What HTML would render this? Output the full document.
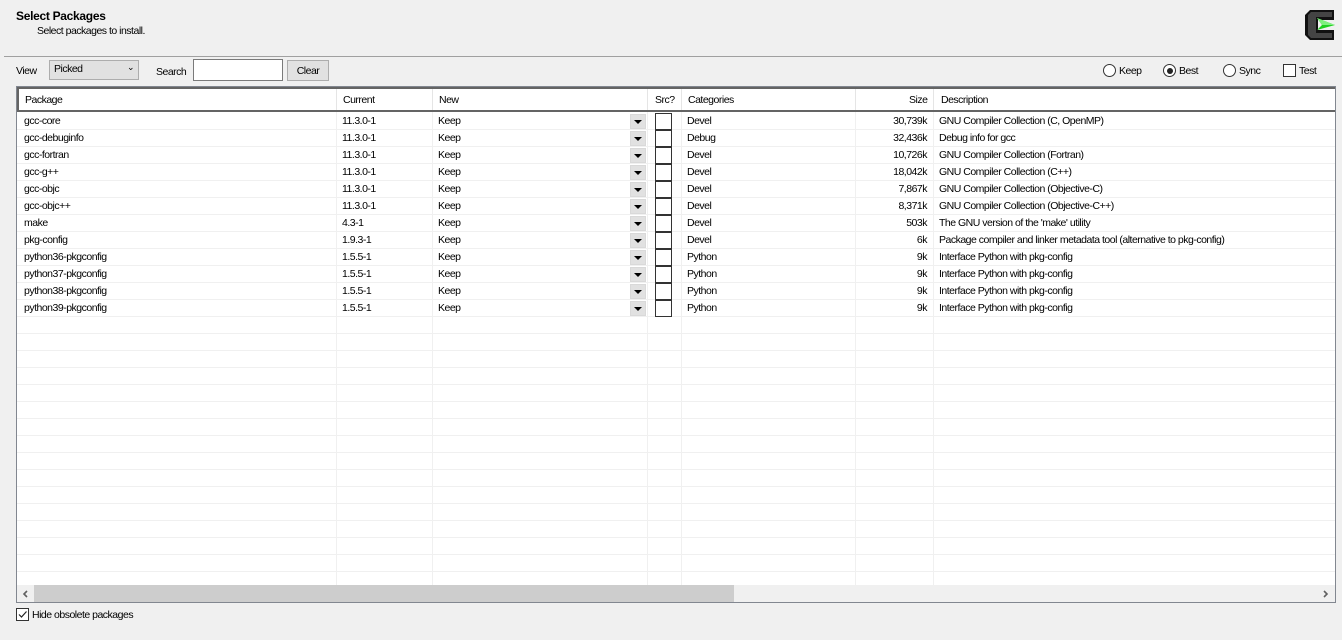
<!DOCTYPE html>
<html><head><meta charset="utf-8"><style>
*{box-sizing:border-box;margin:0;padding:0}
body{width:1342px;height:640px;background:#f0f0f0;font-family:"Liberation Sans",sans-serif;font-size:10.5px;letter-spacing:-0.5px;color:#000;position:relative;overflow:hidden}
.a{position:absolute;white-space:nowrap}
.tbl{position:absolute;left:16px;top:86px;width:1320px;height:517px;border:1px solid #828790;background:#fff;overflow:hidden}
.hdr{position:absolute;left:0;top:0;width:1318px;height:25px;border:2px solid #646464;border-right:none;background:#fff}
.row{position:absolute;left:0;width:1318px;height:17px;border-bottom:1px solid #f0f0f0}
.row span{position:absolute;top:2px}
.vl{position:absolute;top:0;width:1px;height:500px;background:#f0f0f0}
.dd{position:absolute;left:613px;top:1px;width:16px;height:15px;background:#e1e1e1;border:1px solid #d9d9d9}
.dd:after{content:"";position:absolute;left:3px;top:5px;border-left:4px solid transparent;border-right:4px solid transparent;border-top:4px solid #000}
.cb{position:absolute;left:638px;top:0px;width:17px;height:17px;border:1px solid #333;background:#fff}
.r{text-align:right}
</style></head><body>
<div class="a" style="left:16px;top:9px;font-weight:bold;font-size:12px;letter-spacing:-0.3px">Select Packages</div>
<div class="a" style="left:37px;top:25px">Select packages to install.</div>
<svg class="a" style="left:1304px;top:9px" width="34" height="34" viewBox="0 0 34 34"><path d="M6 1h24v10h-16v10h16v10h-24l-5-5v-20z" fill="#111"/><path d="M7 3h21v5h-16v16h16v5h-21l-3-3v-20z" fill="#444"/><path d="M13 9l18 7-18 5 5-5z" fill="#20d020"/><path d="M13 9l18 7h-13z" fill="#7ff07f"/></svg>
<div class="a" style="left:4px;top:56px;width:1338px;height:1px;background:#a0a0a0"></div>
<div class="a" style="left:16px;top:65px">View</div>
<div class="a" style="left:49px;top:60px;width:90px;height:20px;background:#e1e1e1;border:1px solid #adadad;padding:2px 4px">Picked<span style="position:absolute;right:4px;top:1px;font-size:9px">&#8964;</span></div>
<div class="a" style="left:156px;top:66px">Search</div>
<div class="a" style="left:193px;top:59px;width:90px;height:22px;background:#fff;border:1px solid #7a7a7a"></div>
<div class="a" style="left:287px;top:60px;width:42px;height:21px;background:#e1e1e1;border:1px solid #adadad;padding:4px 0;text-align:center">Clear</div>
<div class="a" style="left:1103px;top:64px;width:13px;height:13px;border:1px solid #333;border-radius:50%;background:#fff"></div><div class="a" style="left:1119px;top:65px">Keep</div>
<div class="a" style="left:1163px;top:64px;width:13px;height:13px;border:1px solid #333;border-radius:50%;background:#fff"><div style="position:absolute;left:2.5px;top:2.5px;width:6px;height:6px;border-radius:50%;background:#222"></div></div><div class="a" style="left:1179px;top:65px">Best</div>
<div class="a" style="left:1223px;top:64px;width:13px;height:13px;border:1px solid #333;border-radius:50%;background:#fff"></div><div class="a" style="left:1239px;top:65px">Sync</div>
<div class="a" style="left:1283px;top:64px;width:13px;height:13px;border:1px solid #333;background:#fff"></div><div class="a" style="left:1299px;top:65px">Test</div>
<div class="tbl">
<div class="vl" style="left:319px"></div><div class="vl" style="left:415px"></div><div class="vl" style="left:630px"></div><div class="vl" style="left:664px"></div><div class="vl" style="left:838px"></div><div class="vl" style="left:916px"></div>
<div class="row" style="top:26px"><span style="left:7px">gcc-core</span><span style="left:325px">11.3.0-1</span><span style="left:421px">Keep</span><div class="dd"></div><div class="cb"></div><span style="left:670px">Devel</span><span class="r" style="left:840px;width:70px">30,739k</span><span style="left:922px">GNU Compiler Collection (C, OpenMP)</span></div>
<div class="row" style="top:43px"><span style="left:7px">gcc-debuginfo</span><span style="left:325px">11.3.0-1</span><span style="left:421px">Keep</span><div class="dd"></div><div class="cb"></div><span style="left:670px">Debug</span><span class="r" style="left:840px;width:70px">32,436k</span><span style="left:922px">Debug info for gcc</span></div>
<div class="row" style="top:60px"><span style="left:7px">gcc-fortran</span><span style="left:325px">11.3.0-1</span><span style="left:421px">Keep</span><div class="dd"></div><div class="cb"></div><span style="left:670px">Devel</span><span class="r" style="left:840px;width:70px">10,726k</span><span style="left:922px">GNU Compiler Collection (Fortran)</span></div>
<div class="row" style="top:77px"><span style="left:7px">gcc-g++</span><span style="left:325px">11.3.0-1</span><span style="left:421px">Keep</span><div class="dd"></div><div class="cb"></div><span style="left:670px">Devel</span><span class="r" style="left:840px;width:70px">18,042k</span><span style="left:922px">GNU Compiler Collection (C++)</span></div>
<div class="row" style="top:94px"><span style="left:7px">gcc-objc</span><span style="left:325px">11.3.0-1</span><span style="left:421px">Keep</span><div class="dd"></div><div class="cb"></div><span style="left:670px">Devel</span><span class="r" style="left:840px;width:70px">7,867k</span><span style="left:922px">GNU Compiler Collection (Objective-C)</span></div>
<div class="row" style="top:111px"><span style="left:7px">gcc-objc++</span><span style="left:325px">11.3.0-1</span><span style="left:421px">Keep</span><div class="dd"></div><div class="cb"></div><span style="left:670px">Devel</span><span class="r" style="left:840px;width:70px">8,371k</span><span style="left:922px">GNU Compiler Collection (Objective-C++)</span></div>
<div class="row" style="top:128px"><span style="left:7px">make</span><span style="left:325px">4.3-1</span><span style="left:421px">Keep</span><div class="dd"></div><div class="cb"></div><span style="left:670px">Devel</span><span class="r" style="left:840px;width:70px">503k</span><span style="left:922px">The GNU version of the 'make' utility</span></div>
<div class="row" style="top:145px"><span style="left:7px">pkg-config</span><span style="left:325px">1.9.3-1</span><span style="left:421px">Keep</span><div class="dd"></div><div class="cb"></div><span style="left:670px">Devel</span><span class="r" style="left:840px;width:70px">6k</span><span style="left:922px">Package compiler and linker metadata tool (alternative to pkg-config)</span></div>
<div class="row" style="top:162px"><span style="left:7px">python36-pkgconfig</span><span style="left:325px">1.5.5-1</span><span style="left:421px">Keep</span><div class="dd"></div><div class="cb"></div><span style="left:670px">Python</span><span class="r" style="left:840px;width:70px">9k</span><span style="left:922px">Interface Python with pkg-config</span></div>
<div class="row" style="top:179px"><span style="left:7px">python37-pkgconfig</span><span style="left:325px">1.5.5-1</span><span style="left:421px">Keep</span><div class="dd"></div><div class="cb"></div><span style="left:670px">Python</span><span class="r" style="left:840px;width:70px">9k</span><span style="left:922px">Interface Python with pkg-config</span></div>
<div class="row" style="top:196px"><span style="left:7px">python38-pkgconfig</span><span style="left:325px">1.5.5-1</span><span style="left:421px">Keep</span><div class="dd"></div><div class="cb"></div><span style="left:670px">Python</span><span class="r" style="left:840px;width:70px">9k</span><span style="left:922px">Interface Python with pkg-config</span></div>
<div class="row" style="top:213px"><span style="left:7px">python39-pkgconfig</span><span style="left:325px">1.5.5-1</span><span style="left:421px">Keep</span><div class="dd"></div><div class="cb"></div><span style="left:670px">Python</span><span class="r" style="left:840px;width:70px">9k</span><span style="left:922px">Interface Python with pkg-config</span></div>
<div class="row" style="top:230px"></div><div class="row" style="top:247px"></div><div class="row" style="top:264px"></div><div class="row" style="top:281px"></div><div class="row" style="top:298px"></div><div class="row" style="top:315px"></div><div class="row" style="top:332px"></div><div class="row" style="top:349px"></div><div class="row" style="top:366px"></div><div class="row" style="top:383px"></div><div class="row" style="top:400px"></div><div class="row" style="top:417px"></div><div class="row" style="top:434px"></div><div class="row" style="top:451px"></div><div class="row" style="top:468px"></div><div class="row" style="top:485px"></div>
<div class="hdr"><span class="a" style="left:6px;top:5px">Package</span><span class="a" style="left:324px;top:5px">Current</span><span class="a" style="left:420px;top:5px">New</span><span class="a" style="left:636px;top:5px">Src?</span><span class="a" style="left:669px;top:5px">Categories</span><span class="a" style="left:890px;top:5px">Size</span><span class="a" style="left:922px;top:5px">Description</span>
<div class="a" style="left:317px;top:0;width:1px;height:21px;background:#e5e5e5"></div><div class="a" style="left:413px;top:0;width:1px;height:21px;background:#e5e5e5"></div><div class="a" style="left:628px;top:0;width:1px;height:21px;background:#e5e5e5"></div><div class="a" style="left:662px;top:0;width:1px;height:21px;background:#e5e5e5"></div><div class="a" style="left:836px;top:0;width:1px;height:21px;background:#e5e5e5"></div><div class="a" style="left:914px;top:0;width:1px;height:21px;background:#e5e5e5"></div></div>
<div class="a" style="left:0;top:498px;width:1318px;height:17px;background:#f0f0f0"><div class="a" style="left:17px;top:0;width:700px;height:17px;background:#cdcdcd"></div>
<svg class="a" style="left:5px;top:5px" width="6" height="8"><path d="M5 1l-3 3 3 3" stroke="#606060" stroke-width="1.6" fill="none"/></svg>
<svg class="a" style="left:1306px;top:5px" width="6" height="8"><path d="M1 1l3 3-3 3" stroke="#606060" stroke-width="1.6" fill="none"/></svg></div>
</div>
<div class="a" style="left:16px;top:608px;width:13px;height:13px;border:1px solid #333;background:#fff"><svg width="11" height="11" style="position:absolute;left:0;top:0"><path d="M2 5.5l2.5 2.5 5-5.5" stroke="#222" fill="none" stroke-width="1.2"/></svg></div>
<div class="a" style="left:32px;top:609px">Hide obsolete packages</div>
</body></html>
